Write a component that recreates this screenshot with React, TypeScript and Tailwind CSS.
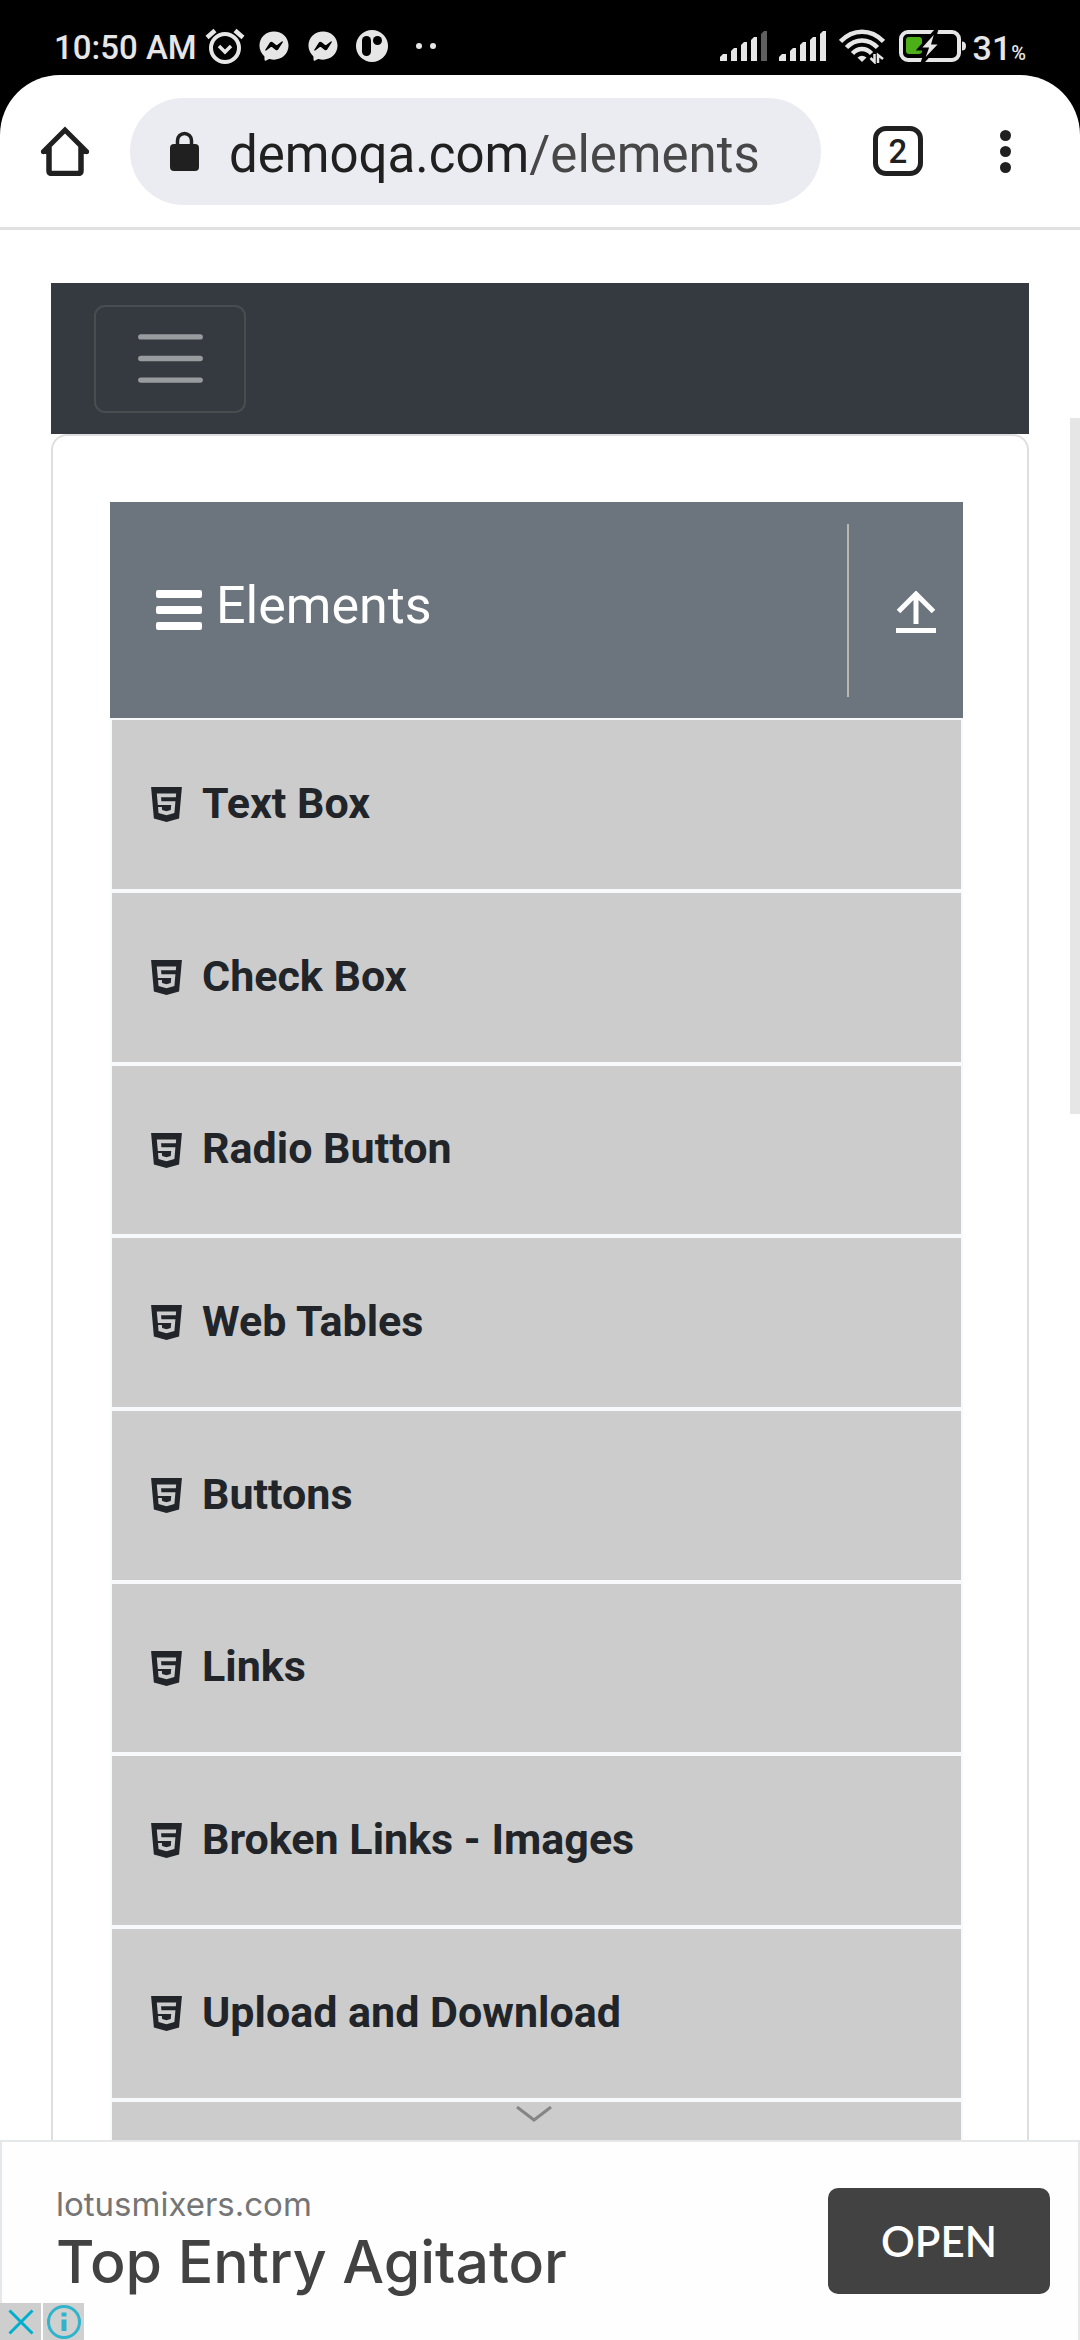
import React from "react";
import { AiFillHtml5 } from "react-icons/ai";
import { FaFacebookMessenger } from "react-icons/fa";

const items = [
  "Text Box",
  "Check Box",
  "Radio Button",
  "Web Tables",
  "Buttons",
  "Links",
  "Broken Links - Images",
  "Upload and Download",
];

function AlarmIcon() {
  return (
    <svg className="h-9 w-10" viewBox="0 0 40 36" fill="none" stroke="currentColor">
      <circle cx="20" cy="20" r="14" strokeWidth="4" />
      <path d="M14 18l6 6 6-6" strokeWidth="3.500" />
      <path d="M2 9.500L10 2.500M38 9.500L30 2.500" strokeWidth="4.500" />
    </svg>
  );
}

function PatreonIcon() {
  return (
    <svg className="h-8 w-8" viewBox="0 0 32 32">
      <circle cx="16" cy="16" r="16" fill="currentColor" />
      <rect x="6" y="6" width="9" height="20" rx="4.500" fill="#000" />
      <circle cx="21.500" cy="10.500" r="4.500" fill="#000" />
    </svg>
  );
}

function SignalIcon({ last }: { last: string }) {
  return (
    <svg className="h-[30px] w-12" viewBox="0 0 48 30" fill="currentColor">
      <path d="M0 26l3-3h4v7H0z" />
      <path d="M11 20l3-3h3v13h-6z" />
      <path d="M21 14l3-3h3v19h-6z" />
      <path d="M31 9l3-3h3v24h-6z" />
      <path d="M41 3l3-3h3v30h-6z" fill={last} />
    </svg>
  );
}

function WifiIcon() {
  return (
    <svg className="h-9 w-[46px]" viewBox="0 0 46 36" fill="none" stroke="currentColor">
      <path d="M1.500 13.500C14 .5 32 .5 44.500 13.500" strokeWidth="4.500" />
      <path d="M7.500 19.500C16.500 10 29.500 10 38.500 19.500" strokeWidth="4.500" />
      <path d="M13.500 25.500C19 19.500 27 19.500 32.500 25.500" strokeWidth="4.500" />
      <path d="M18.500 29.500q4.500-3.500 9 0L23 34z" fill="currentColor" stroke="none" />
      <path d="M35.500 26v8l-4-4M39 35v-8l5 4" strokeWidth="2.500" />
    </svg>
  );
}

function BatteryIcon() {
  return (
    <svg className="h-8 w-[68px]" viewBox="0 0 68 32">
      <rect x="2" y="2" width="58" height="28" rx="7" fill="none" stroke="currentColor" strokeWidth="4" />
      <rect x="7" y="7" width="16" height="17" rx="3" fill="#4caf17" />
      <path d="M63 11.500q4 0 4 4.500t-4 4.500z" fill="currentColor" />
      <path d="M38-1L20 19h8l-5 14L42 13h-8z" fill="currentColor" stroke="#000" strokeWidth="3" />
    </svg>
  );
}

function StatusBar() {
  return (
    <div className="flex h-[75px] items-start bg-black pt-7 text-[#e6e6e6]">
      <div className="flex h-9 flex-1 items-center justify-between pr-[54px] pl-[54px]">
        <div className="flex items-center">
          <span className="mr-2 pt-1 text-[33px] font-medium leading-9">10:50 AM</span>
          <AlarmIcon />
          <FaFacebookMessenger className="ml-3.5 size-[30px]" />
          <FaFacebookMessenger className="ml-[19px] size-[30px]" />
          <span className="ml-[18px]">
            <PatreonIcon />
          </span>
          <span className="ml-7 flex gap-2">
            <i className="size-1.5 rounded-full bg-current" />
            <i className="size-1.5 rounded-full bg-current" />
          </span>
        </div>
        <div className="flex items-center">
          <SignalIcon last="#5f5f5f" />
          <span className="ml-[11px]">
            <SignalIcon last="#e6e6e6" />
          </span>
          <span className="ml-3">
            <WifiIcon />
          </span>
          <span className="ml-3.5">
            <BatteryIcon />
          </span>
          <span className="ml-1.5 flex items-baseline pt-1 font-medium leading-9">
            <span className="text-[34px]">31</span>
            <span className="text-xl">%</span>
          </span>
        </div>
      </div>
    </div>
  );
}

function BrowserBar() {
  return (
    <div className="bg-black">
      <div className="flex h-[155px] items-center rounded-t-[60px] border-b-[3px] border-[#e0e0e0] bg-white pr-[65px] pl-10 text-[#202020]">
        <button type="button" aria-label="Home" className="mr-10">
          <svg className="size-[50px]" viewBox="0 0 50 50" fill="none" stroke="currentColor">
            <path d="M9 21v23.500q0 3 3 3h26q3 0 3-3V21" strokeWidth="5.500" />
            <path d="M3.500 25.500L25 4l21.500 21.500" strokeWidth="5" strokeLinecap="round" />
            <path d="M3 26h6M41 26h6" strokeWidth="4" strokeLinecap="round" />
          </svg>
        </button>
        <div className="flex h-[107px] min-w-0 flex-1 items-center rounded-full bg-[#ebecf1] pl-10">
          <svg className="mr-[30px] h-10 w-[29px] shrink-0" viewBox="0 0 29 40">
            <rect y="13" width="29" height="27" rx="4" fill="currentColor" />
            <path d="M7.500 15V9.500a7 7 0 0 1 14 0V15" fill="none" stroke="currentColor" strokeWidth="3.500" />
          </svg>
          <span className="pt-2 text-[51px] leading-[60px] whitespace-nowrap">
            demoqa.com<span className="text-[#474747]">/elements</span>
          </span>
        </div>
        <button
          type="button"
          aria-label="Tabs"
          className="ml-[52px] flex size-[50px] items-center justify-center rounded-[13px] border-[5px] border-current text-[33px] leading-none font-medium"
        >
          2
        </button>
        <button type="button" aria-label="Menu" className="ml-[72px] flex w-5 flex-col items-center gap-[5px]">
          <i className="size-[11px] rounded-full bg-current" />
          <i className="size-[11px] rounded-full bg-current" />
          <i className="size-[11px] rounded-full bg-current" />
        </button>
      </div>
    </div>
  );
}

function ElementsHeader() {
  return (
    <button type="button" className="flex h-[216px] w-full items-center bg-[#6c757d] pr-[26px] pl-[46px] text-white">
      <svg className="mr-3.5 h-10 w-[46px]" viewBox="0 0 46 40" fill="currentColor">
        <rect width="46" height="8" rx="2" />
        <rect y="16" width="46" height="8" rx="2" />
        <rect y="32" width="46" height="8" rx="2" />
      </svg>
      <span className="pb-2 text-[52px] leading-[62px]">Elements</span>
      <span className="ml-auto h-[173px] w-0.5 bg-[#b7b7b3]" />
      <span className="ml-[46px] pt-1">
        <svg className="h-[42px] w-[42px]" viewBox="0 0 42 42" fill="none" stroke="currentColor">
          <path d="M21 33V3M3.500 20.500L21 3l17.500 17.500" strokeWidth="5" />
          <path d="M1 39.500h40" strokeWidth="5" />
        </svg>
      </span>
    </button>
  );
}

function Ad() {
  return (
    <aside className="relative flex h-[200px] shrink-0 items-start border-x-2 border-t-2 border-[#e6e7e8] bg-[#fefefe] pt-[46px] pr-7 pl-[54px]">
      <svg className="absolute -top-9 left-1/2 -ml-6 h-4 w-9" viewBox="0 0 36 16" fill="none" stroke="#858585" strokeWidth="3">
        <path d="M1 1l17 13L35 1" />
      </svg>
      <a href="#ad" className="flex min-w-0 flex-1 flex-col font-['Inter',sans-serif] whitespace-nowrap">
        <span className="text-[33px] leading-8 text-[#757575]">lotusmixers.com</span>
        <span className="text-[59px] leading-[84px] font-medium text-[#424242]">Top Entry Agitator</span>
      </a>
      <button
        type="button"
        className="h-[106px] w-[222px] rounded-[10px] bg-[#424242] font-['Lato',sans-serif] text-[42px] font-semibold text-white"
      >
        OPEN
      </button>
      <div className="absolute bottom-0 -left-0.5 flex gap-0.5 text-[#00aecd]">
        <button type="button" aria-label="Close ad" className="flex h-[37px] w-[41px] items-center justify-center bg-[#cecece]">
          <svg className="size-[26px]" viewBox="0 0 26 26" fill="none" stroke="currentColor" strokeWidth="3">
            <path d="M1.500 1.500l23 23M24.500 1.500l-23 23" />
          </svg>
        </button>
        <button type="button" aria-label="Ad information" className="flex h-[37px] w-[41px] items-center justify-center bg-[#d0d0d0]">
          <svg className="size-9" viewBox="0 0 36 36" fill="none" stroke="#2fb4cc" strokeWidth="3">
            <circle cx="18" cy="18" r="15.500" />
            <path d="M18 15.500V27M18 8.500v4" strokeWidth="5" />
          </svg>
        </button>
      </div>
    </aside>
  );
}

export default function App() {
  return (
    <div className="flex h-screen flex-col overflow-hidden bg-white font-['Roboto',sans-serif]">
      <StatusBar />
      <BrowserBar />
      <main className="relative min-h-0 flex-1 overflow-hidden px-[51px] pt-[53px]">
        <nav className="flex h-[151px] items-center bg-[#343a40] px-[43px]">
          <button
            type="button"
            aria-label="Toggle navigation"
            className="flex h-[108px] w-[152px] items-center justify-center rounded-[11px] border-2 border-[#484d50]"
          >
            <svg className="size-[81px]" viewBox="0 0 30 30" stroke="#999c9f" strokeWidth="2" strokeLinecap="round">
              <path d="M4 7h22M4 15h22M4 23h22" />
            </svg>
          </button>
        </nav>
        <div className="rounded-t-2xl border-2 border-b-0 border-[#dedede] px-[57px] pt-[66px]">
          <div className="mr-[7px]">
            <ElementsHeader />
            <ul className="bg-[#f8f9fa]">
              {items.map((item) => (
                <li key={item} className="h-[173px] border-2 border-[#f8f9fa] bg-[#ccc] nth-[3n]:h-[172px]">
                  <a
                    href={"#" + item.toLowerCase().split(" ").join("-")}
                    className="flex h-full items-center pl-[33px] text-[43px] leading-[52px] font-bold text-[#212529]"
                  >
                    <AiFillHtml5 className="mr-3.5 size-[43px]" />
                    <span className="pb-1">{item}</span>
                  </a>
                </li>
              ))}
              <li className="h-[173px] border-2 border-[#f8f9fa] bg-[#ccc]" />
            </ul>
          </div>
        </div>
        <div className="absolute top-[188px] right-0 h-[696px] w-2.5 bg-[#e6e6e6]" />
      </main>
      <Ad />
    </div>
  );
}
